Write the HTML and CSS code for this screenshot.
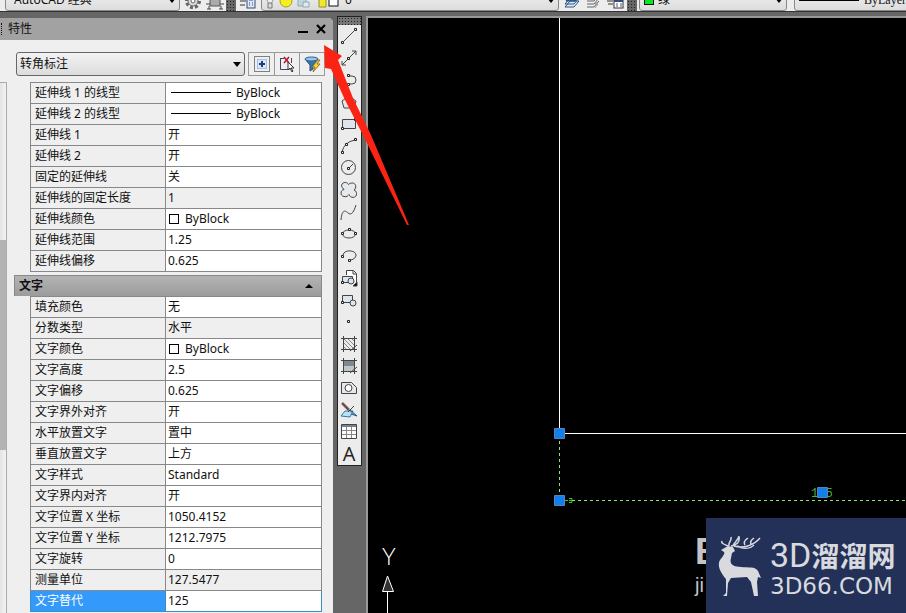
FILE: index.html
```html
<!DOCTYPE html>
<html lang="zh-CN">
<head>
<meta charset="utf-8">
<title>AutoCAD</title>
<link rel="stylesheet" href="styles.css">
</head>
<body>
<header class="topbar">
  <div class="group workspace">
    <select class="combo" aria-label="工作空间"><option>AutoCAD 经典</option></select>
    <svg class="ticon" viewBox="0 0 18 18"><circle cx="9" cy="8" r="6.500" fill="none" stroke="#666" stroke-width="3" stroke-dasharray="3 2"/><circle cx="9" cy="8" r="5" fill="#ddd" stroke="#666"/><circle cx="9" cy="8" r="2" fill="#fff" stroke="#666"/></svg>
    <svg class="ticon" viewBox="0 0 18 18"><rect x="4" y="3" width="10" height="10" fill="#aaa" stroke="#555"/><path d="M0 11h4M14 11h4M3 13v3M15 13v3M1 16h4M13 16h4" stroke="#444" fill="none"/></svg>
  </div>
  <div class="grip"></div>
  <div class="group layers">
    <svg class="ticon" viewBox="0 0 18 18"><path d="M1 8h6M1 12h5" stroke="#333"/><rect x="8" y="4" width="8" height="11" fill="#dfe8f2" stroke="#334d78"/><path d="M10 7h4M10 10h1M13 10h1M10 12h1M13 12h1" stroke="#26508c"/></svg>
    <div class="field">
      <select class="combo" aria-label="图层"><option>0</option></select>
      <svg class="states" viewBox="0 0 76 18"><path d="M4 10h4v5H4z" fill="#ddd" stroke="#777"/><circle cx="6" cy="7" r="3" fill="#eee" stroke="#999"/><circle cx="22" cy="8" r="6" fill="#f3ef22" stroke="#a9a21c"/><path d="M34 4h8v9h-8z" fill="#bed7df" stroke="#91a9b2"/><path d="M39 9h6v5h-6z" fill="#dceaf0" stroke="#91a9b2"/><path d="M55 6h7v8h-7z" fill="#f0e82a" stroke="#97911f"/><rect x="65" y="3" width="9" height="10" fill="#fff" stroke="#111"/></svg>
    </div>
    <svg class="ticon" viewBox="0 0 18 18"><path d="M2 14h9l5-6H7zM2 11h9l5-6H7z" fill="#dce9f7" stroke="#31577f"/><path d="M3 8h9l4-5H7z" fill="#3570b5" stroke="#244a78"/></svg>
    <svg class="ticon" viewBox="0 0 18 18"><path d="M2 14h7l5-6M2 11h7l5-6M2 8h7l5-6" fill="none" stroke="#666"/><path d="M12 8l-2 3h3l-3 4" fill="none" stroke="#999"/></svg>
    <svg class="ticon" viewBox="0 0 18 18"><path d="M0 8h6M1 11h5" stroke="#333"/><rect x="7" y="6" width="9" height="9" fill="#fff" stroke="#334"/><path d="M7 8h9" stroke="#334d78" stroke-width="2"/><path d="M9 11h2M13 11h2M9 13h2M13 13h2" stroke="#557"/></svg>
  </div>
  <div class="grip"></div>
  <div class="group props">
    <div class="field">
      <select class="combo" aria-label="颜色"><option>绿</option></select>
      <span class="green"></span>
    </div>
    <div class="field linetype">
      <select class="combo" aria-label="线型"><option>ByLayer</option></select>
      <span class="stroke"></span>
    </div>
  </div>
</header>

<main class="work">
  <section class="palette">
    <header class="caption">
      <span class="dots"></span>
      <h1>特性</h1>
      <button class="min" aria-label="最小化"><svg viewBox="0 0 12 12"><path d="M1 9h10" stroke="#000" stroke-width="2"/></svg></button>
      <button class="min" aria-label="关闭"><svg viewBox="0 0 12 12"><path d="M2 2l8 8M10 2l-8 8" stroke="#000" stroke-width="2.200"/></svg></button>
    </header>
    <div class="pick">
      <select class="object" aria-label="对象"><option>转角标注</option></select>
      <div class="picktools">
        <button aria-label="切换 PICKADD"><svg viewBox="0 0 18 18"><path d="M1.500 1.500h15v15h-15z" fill="none" stroke="#111" stroke-dasharray="1 1"/><path d="M4.500 4.500h9v9h-9z" fill="#d8e8fa" stroke="#6c8fc0" stroke-dasharray="1 1"/><path d="M9 6v6M6 9h6" stroke="#163e80" stroke-width="2"/></svg></button>
        <button aria-label="选择对象"><svg viewBox="0 0 18 18"><path d="M2.500 3v11.500h9M2 3.500h4M13.500 3v5" fill="none" stroke="#446"/><path d="M6 2l5 6M11 2l-5 6" stroke="#b51427" stroke-width="1.500"/><path d="M10 7v8l2-2 2 4 1-1-2-3h3z" fill="#fff" stroke="#333"/></svg></button>
        <button aria-label="快速选择"><svg viewBox="0 0 18 18"><path d="M2 4l5 6v6l3-2v-4l5-6z" fill="#3975b1" stroke="#244f7c"/><ellipse cx="8.500" cy="4" rx="6.500" ry="2" fill="#9bc4e5" stroke="#2d6397"/><path d="M15 5l-6 7h3l-2 5 7-8h-3l3-4z" fill="#f7d43c" stroke="#98751b"/></svg></button>
      </div>
    </div>
    <div class="list">
      <div class="scroll"><div class="thumb"></div></div>
      <div class="sections">
        <table class="grid">
          <tr><th>延伸线 1 的线型</th><td><span class="sample"></span>ByBlock</td></tr>
          <tr><th>延伸线 2 的线型</th><td><span class="sample"></span>ByBlock</td></tr>
          <tr><th>延伸线 1</th><td>开</td></tr>
          <tr><th>延伸线 2</th><td>开</td></tr>
          <tr><th>固定的延伸线</th><td>关</td></tr>
          <tr><th>延伸线的固定长度</th><td class="locked">1</td></tr>
          <tr><th>延伸线颜色</th><td><span class="swatch"></span>ByBlock</td></tr>
          <tr><th>延伸线范围</th><td>1.25</td></tr>
          <tr><th>延伸线偏移</th><td>0.625</td></tr>
        </table>
        <button class="section">文字<svg viewBox="0 0 8 4"><path d="M0 4h8L4 0z"/></svg></button>
        <table class="grid">
          <tr><th>填充颜色</th><td>无</td></tr>
          <tr><th>分数类型</th><td class="locked">水平</td></tr>
          <tr><th>文字颜色</th><td><span class="swatch"></span>ByBlock</td></tr>
          <tr><th>文字高度</th><td>2.5</td></tr>
          <tr><th>文字偏移</th><td>0.625</td></tr>
          <tr><th>文字界外对齐</th><td>开</td></tr>
          <tr><th>水平放置文字</th><td>置中</td></tr>
          <tr><th>垂直放置文字</th><td>上方</td></tr>
          <tr><th>文字样式</th><td>Standard</td></tr>
          <tr><th>文字界内对齐</th><td>开</td></tr>
          <tr><th>文字位置 X 坐标</th><td>1050.4152</td></tr>
          <tr><th>文字位置 Y 坐标</th><td>1212.7975</td></tr>
          <tr><th>文字旋转</th><td>0</td></tr>
          <tr><th>测量单位</th><td class="locked">127.5477</td></tr>
          <tr class="active"><th><label for="override">文字替代</label></th><td><input id="override" value="125"></td></tr>
        </table>
      </div>
    </div>
  </section>

  <nav class="tools" aria-label="绘图">
    <div class="handle"></div>
    <button aria-label="直线"><svg viewBox="0 0 18 18"><path d="M4 14L14 4"/><path class="n" d="M1.500 14.500h2v2h-2zM14.500 1.500h2v2h-2z"/></svg></button>
    <button aria-label="构造线"><svg viewBox="0 0 18 18"><path d="M2 16L16 2M12 2h4v4M2 12v4h4"/><path class="n" d="M7.500 8.500h2v2h-2z"/></svg></button>
    <button aria-label="多段线"><svg viewBox="0 0 18 18"><path d="M9 5h3a4 4 0 0 1 0 8h-3"/><path class="n" d="M7.500 3.500h2v2h-2zM7.500 12.500h2v2h-2z"/></svg></button>
    <button aria-label="正多边形"><svg viewBox="0 0 18 18"><path d="M9 3l7 5-2 7H4L2 8z" fill="#e1e6ec"/></svg></button>
    <button aria-label="矩形"><svg viewBox="0 0 18 18"><path d="M2.500 4.500h13v9h-13z" fill="#dfe5eb"/><path class="n" d="M1.500 12.500h2v2h-2zM14.500 3.500h2v2h-2z"/></svg></button>
    <button aria-label="圆弧"><svg viewBox="0 0 18 18"><path d="M2 15Q4 5 15 3"/><path class="n" d="M1.500 14.500h2v2h-2zM5.500 6.500h2v2h-2zM14.500 1.500h2v2h-2z"/></svg></button>
    <button aria-label="圆"><svg viewBox="0 0 18 18"><circle cx="8.500" cy="8.500" r="7"/><path d="M9 9l4-4"/><path class="n" d="M7.500 8.500h2v2h-2z"/></svg></button>
    <button aria-label="修订云线"><svg viewBox="0 0 18 18"><path d="M8.500 3.500C7 0 0 1 2 6.500c1 1 2 1 2 2C0 9 0 15 4 15.500c3 1 4-1 5-2 1 4 8 4 7.500-1 0-2-1-3-2.500-3.500 3-2 2-7-1.500-7-2 0-3 .5-4 1.500z" fill="#e6eaed"/></svg></button>
    <button aria-label="样条曲线"><svg viewBox="0 0 18 18"><path d="M1 17C2 5 6 8 8 10c4 3 6-2 8-8"/></svg></button>
    <button aria-label="椭圆"><svg viewBox="0 0 18 18"><ellipse cx="9" cy="9" rx="6.500" ry="4"/><path class="n" d="M1.500 7.500h2v2h-2zM14.500 7.500h2v2h-2zM8.500 3.500h2v2h-2z"/></svg></button>
    <button aria-label="椭圆弧"><svg viewBox="0 0 18 18"><path d="M3 8c1-6 13-5 13 0 0 3-3 5-7 5"/><path class="n" d="M1.500 8.500h2v2h-2zM8.500 12.500h2v2h-2z"/></svg></button>
    <button aria-label="插入块"><svg viewBox="0 0 18 18"><path d="M6.500 6V1.500h7l3 3V14M13 2v3h3" fill="#fff"/><path d="M2.500 7.500h10v6h-10z" fill="#dce4ed"/><circle cx="11" cy="12" r="3" fill="#dce4ed"/><path class="n" d="M1.500 12.500h2v2h-2z"/><path d="M17 13v4h-4z" fill="#000"/></svg></button>
    <button aria-label="创建块"><svg viewBox="0 0 18 18"><path d="M2.500 4.500h10v7h-10z" fill="#dce4ed"/><circle cx="13" cy="12" r="3" fill="#dce4ed"/><path class="n" d="M1.500 10.500h2v2h-2z"/></svg></button>
    <button aria-label="点"><svg viewBox="0 0 18 18"><path class="n" d="M7.500 7.500h2v2h-2z"/></svg></button>
    <button aria-label="图案填充"><svg viewBox="0 0 18 18"><path d="M1 3.500h16M1 14.500h16M3.500 1v16M14.500 1v16"/><path d="M4 4l10 10M4 8l6 6M8 4l6 6M4 12l2 2M12 4l2 2" stroke="#888"/><path d="M17 10l-7 6"/></svg></button>
    <button aria-label="渐变色"><svg viewBox="0 0 18 18"><path d="M4 4h10v5H4z" fill="#7d8990" stroke="none"/><path d="M4 9h10v5H4z" fill="#bdc7ca" stroke="none"/><path d="M1 3.500h16M1 14.500h16M3.500 1v16M14.500 1v16M17 10l-7 6"/></svg></button>
    <button aria-label="面域"><svg viewBox="0 0 18 18"><path d="M1.500 3.500h10l5 5v6h-15z" fill="#e5e9ed"/><circle cx="8.500" cy="9" r="3.500" fill="#fff"/></svg></button>
    <button aria-label="区域覆盖"><svg viewBox="0 0 18 18"><path d="M1 15l4-5h8l-3 6z" fill="#b9e0f5" stroke="#327aa7"/><path d="M10 9l7 6-6-2" fill="#67a9ce" stroke="#245b80"/><path d="M2 2l7 7" stroke="#70504a" stroke-width="2.500"/><path d="M8 11l6-6"/></svg></button>
    <button aria-label="表格"><svg viewBox="0 0 18 18"><path d="M1.500 1.500h15v14h-15z" fill="#fff"/><path d="M2 3h14" stroke="#718294" stroke-width="2"/><path d="M2 7.500h14M2 11.500h14M6.500 4v11M11.500 4v11" stroke="#888"/></svg></button>
    <button class="letter" aria-label="多行文字">A</button>
  </nav>

  <section class="canvas">
    <svg class="drawing" width="100%" height="100%">
      <g stroke="#fff"><path d="M191.500 0v415"/><line x1="191" y1="415.500" x2="100%" y2="415.500"/></g>
      <g stroke="#8be56e" stroke-dasharray="3 3"><path d="M191.500 423v54"/><line x1="204" y1="482.500" x2="100%" y2="482.500"/></g>
      <path d="M197 482.500h3M201 480.500h3v4h-3M201 482.500h3" fill="none" stroke="#39c832"/>
      <text class="dim" x="443" y="479">125</text>
      <g fill="#137fea" stroke="#4e86bd"><path d="M186.500 410.500h10v10h-10zM186.500 477.500h10v10h-10zM449.500 469.500h10v10h-10z"/></g>
      <text class="axis" x="14" y="547">Y</text>
      <path d="M19.500 558l-5 15.500h11z" fill="#333" stroke="#fff"/><path d="M19.500 574v60" stroke="#fff"/>
    </svg>
    <div class="under"><b>B</b><span>ji</span></div>
    <div class="badge">
      <svg class="deer" viewBox="0 0 46 60"><path d="M3 14l7-4 5 1 2 4-3 2-1 5c-2 7 3 9 10 9 8 1 14-1 17 4l3 7-3-1-1 5 1 14h-4l-3-14-4-5-16 1-3 5-1 13H5l3-3V43C2 36-1 29 2 24c4-5 5-7 4-8z" fill="#d8dade"/><path d="M10 10C5 8 3 7 4 5M11 10C10 6 14 5 13 1M15 10c1-4 5-5 6-10M13 10c6-1 9-4 8-9M16 10c10 3 20-1 26-8M27 9c-2-3 0-5 3-7M33 8c-1-2 0-4 3-6M19 10c8 4 14 2 17-1" fill="none" stroke="#d8dade" stroke-width="1.500"/></svg>
      <div class="brand"><div class="name"><span>3D</span>溜溜网</div><div class="site">3D66.COM</div></div>
    </div>
  </section>
</main>
<svg class="pointer" viewBox="0 0 90 184"><path d="M2 1L20 12 16 16 31 54 49 91 87 181 85 181 41 91 23 56 9 25 3 24z" fill="#fb2414"/></svg>
</body>
</html>
```

FILE: styles.css
```css
* { box-sizing: border-box; }
body {
  margin: 0;
  height: 100vh;
  display: flex;
  flex-direction: column;
  overflow: hidden;
  background: #666;
  color: #111;
  font: 12px/20px "Noto Sans", "Noto Sans CJK SC", sans-serif;
}
button, select, input { font: inherit; color: inherit; margin: 0; }
button { padding: 0; border: 0; background: none; display: grid; place-items: center; }
svg { display: block; }

.topbar { display: flex; flex: none; height: 12px; overflow: hidden; background: #ededed; border-bottom: 1px solid #333; }
.group { display: flex; align-items: flex-end; height: 11px; }
.combo, .object {
  appearance: none;
  border: 1px solid #888;
  border-radius: 3px;
  color: #111;
  background: url("data:image/svg+xml,%3Csvg xmlns='http://www.w3.org/2000/svg' width='8' height='5'%3E%3Cpath d='M0 0h8L4 5z'/%3E%3C/svg%3E") no-repeat right 3px center, linear-gradient(#f3f3f3, #dcdcdc);
}
.combo { height: 22px; padding: 0 8px; width: 100%; }
.ticon { width: 18px; height: 18px; flex: none; }
.workspace { width: 226px; padding-left: 5px; gap: 4px; }
.workspace .combo { width: 175px; }
.grip { flex: none; width: 10px; background: radial-gradient(#222 1px, transparent 1px) 0 0 / 3px 3px, #666; }
.layers { flex: 1; gap: 4px; padding: 0 2px 0 3px; }
.field { position: relative; flex: 1; height: 22px; }
.layers .combo { padding-left: 83px; }
.states { position: absolute; left: 3px; bottom: 0; width: 76px; height: 18px; }
.props { width: 269px; gap: 7px; padding-left: 2px; }
.props .field { flex: none; width: 148px; }
.props .linetype { width: 140px; }
.props .combo { padding-left: 18px; }
.props .linetype .combo { padding-left: 69px; font-family: "Liberation Serif", serif; }
.green { position: absolute; left: 5px; bottom: 6px; width: 10px; height: 10px; background: #0be51c; border: 1px solid #111; }
.stroke { position: absolute; left: 5px; bottom: 10px; width: 60px; height: 1px; background: #000; }

.work { display: flex; flex: 1; min-height: 0; padding-top: 4px; }
.palette { flex: none; width: 333px; margin-top: 2px; display: flex; flex-direction: column; background: #efefef; border-radius: 0 5px 0 0; }
.caption { flex: none; display: flex; align-items: center; height: 22px; padding: 0 3px 0 1px; background: #a2a2a2; border-radius: 0 5px 0 0; }
.caption h1 { flex: 1; margin: 0 0 0 4px; font-size: 12px; font-weight: 400; }
.dots { width: 3px; height: 12px; border-left: 1px dotted #111; }
.min { width: 18px; height: 18px; }
.min svg { width: 12px; height: 12px; }
.pick { display: flex; gap: 3px; padding: 12px 8px 6px 16px; }
.object { flex: 1; height: 24px; padding: 0 3px; border-color: #666; }
.picktools { display: flex; border: 1px solid #999; }
.picktools button { width: 25px; height: 22px; }
.picktools button + button { border-left: 1px solid #999; }
.picktools svg { width: 18px; height: 18px; }
.list { flex: 1; min-height: 0; display: flex; overflow: hidden; }
.scroll { width: 7px; flex: none; padding-top: 157px; background: linear-gradient(90deg, #e4e4e4, #f2f2f2); border: 1px solid #aaa; border-left: 0; border-bottom: 0; }
.thumb { height: 210px; background: #b3b3b3; }
.sections { flex: 1; padding: 0 11px 0 7px; }
.grid { width: calc(100% - 16px); margin-left: 16px; border-collapse: collapse; table-layout: fixed; }
.grid tr { height: 21px; }
.grid th, .grid td { border: 1px solid #888; padding: 0 0 0 4px; height: 21px; line-height: 18px; white-space: nowrap; }
.grid th { width: 135px; font-weight: 400; text-align: left; }
.grid td { background: #fff; padding-left: 2px; }
.grid .locked { background: #efefef; }
.sample { display: inline-block; width: 60px; height: 1px; margin: 0 5px 0 3px; vertical-align: 4px; background: #000; }
.swatch { display: inline-block; width: 10px; height: 10px; margin: 0 6px 0 1px; border: 1px solid #000; vertical-align: -1px; }
.section { display: flex; justify-content: space-between; align-items: center; width: 100%; height: 21px; margin-top: 3px; padding: 0 8px 0 4px; border: 1px solid #888; border-bottom: 0; background: linear-gradient(#b4b4b4, #9b9b9b); font-weight: 700; }
.section svg { width: 8px; height: 4px; }
.active th { background: #3399fb; color: #fff; }
.grid .active th, .grid .active td { border-color: #3b8fc5; }
.active input { display: block; width: 100%; height: 18px; padding: 0; border: 0; outline: 0; background: none; }

.tools { flex: none; align-self: flex-start; width: 25px; margin: 0 4px; border: 1px solid #222; background: #ececec; }
.handle { height: 8px; background: radial-gradient(#222 1px, transparent 1px) 0 0 / 3px 3px, #777; }
.tools button { width: 22px; height: 22px; }
.tools svg { width: 18px; height: 18px; fill: none; stroke: #444; }
.tools .n { fill: #fff; stroke: #222; }
.tools .letter { font: 20px/22px "Open Sans", sans-serif; color: #222; }

.canvas { position: relative; flex: 1; min-width: 0; overflow: hidden; background: #000; border: solid #999; border-width: 2px 0 0 2px; }
.drawing { position: absolute; inset: 0; }
.dim { font: 12px "Liberation Mono", monospace; fill: #4fae3d; }
.axis { font: 300 23px Lato, sans-serif; fill: #fff; }
.under { position: absolute; right: 183px; bottom: 16px; width: 28px; color: #c4c4c4; }
.under b, .under span { display: block; }
.under b { font: 700 36px/42px "Liberation Sans", sans-serif; }
.under span { font: 20px/24px "Liberation Sans", sans-serif; }
.badge { position: absolute; right: 0; bottom: 0; display: flex; gap: 6px; width: 200px; height: 95px; padding: 18px 0 0 12px; background: #233159; color: #d8dade; }
.deer { width: 46px; height: 60px; flex: none; }
.brand { white-space: nowrap; }
.name { display: flex; align-items: center; height: 38px; font: 700 28px/38px "Noto Sans CJK SC", sans-serif; }
.name span { font: 34px/38px Roboto, sans-serif; }
.site { font: 23px/24px "DejaVu Sans", sans-serif; }
.pointer { position: absolute; left: 322px; top: 44px; width: 90px; height: 184px; pointer-events: none; }
```
